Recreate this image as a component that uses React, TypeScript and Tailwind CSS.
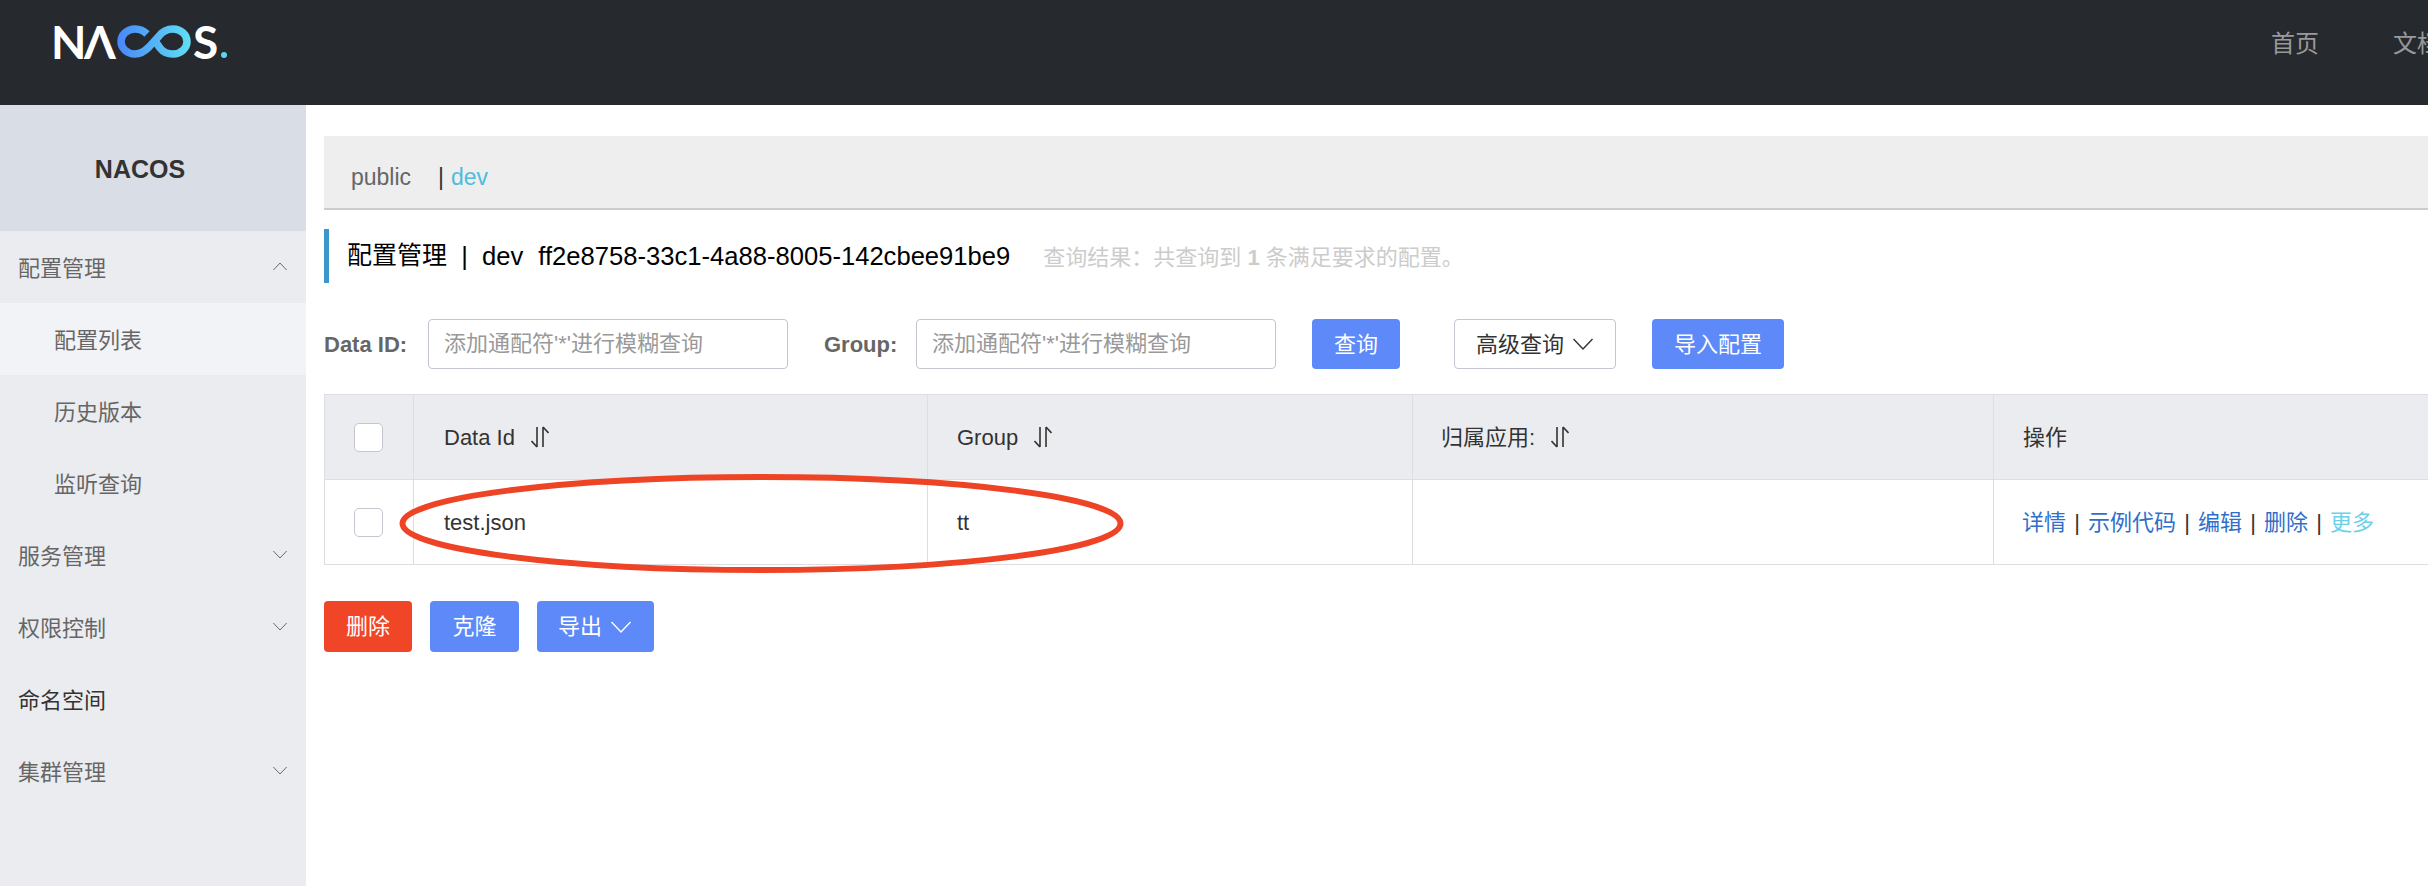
const sans = "font-['Liberation_Sans','Noto_Sans_CJK_SC',sans-serif]";

function Chevron({ up = false, className = "" }: { up?: boolean; className?: string }) {
  return (
    <svg viewBox="0 0 20 12" fill="none" stroke="currentColor" strokeWidth="1.4" className={className}>
      <path d={up ? "M.5 11 10 1l9.500 10" : "M.5 1 10 11l9.500-10"} />
    </svg>
  );
}

function SortIcon() {
  return (
    <svg viewBox="0 0 18 24" fill="none" stroke="#333" strokeWidth="1.6" className="ml-[16px] h-6 w-[18px]">
      <path d="M6 2v20M6 22 .5 16" />
      <path d="M12 22V2M12 2l5.500 6" />
    </svg>
  );
}

function Logo() {
  return (
    <div className="flex h-[33px] items-center font-['Lato',sans-serif] text-[46px] leading-[33px] font-bold text-white">
      <span className="w-[33px]">N</span>
      <span className="w-[33px]">Λ</span>
      <svg viewBox="0 0 74 33" fill="none" className="h-[33px] w-[74px]">
        <defs>
          <linearGradient id="nacos-loop" x1="0" x2="74" y1="0" y2="0" gradientUnits="userSpaceOnUse">
            <stop offset="0" stopColor="#4a86f7" />
            <stop offset="1" stopColor="#5fe0f5" />
          </linearGradient>
        </defs>
        <path
          d="M30 9C27 6 23 4 18 4 10 4 4 10 4 16.500 4 23 10 29 18 29c6 0 10-3 14-7l10-11c3-4 8-7 14-7 8 0 14 6 14 12.500 0 6.500-6 12.500-14 12.500-5 0-10-2-13-6l-5-7"
          stroke="url(#nacos-loop)"
          strokeWidth="7.500"
        />
      </svg>
      <span className="ml-[2px] w-[27px]">S</span>
      <span className="ml-[1px] h-[6px] w-[6px] self-end rounded-full bg-[#5fd4ee]" />
    </div>
  );
}

const menu = [
  { label: "配置管理", indent: false, arrow: "up" },
  { label: "配置列表", indent: true, active: true },
  { label: "历史版本", indent: true },
  { label: "监听查询", indent: true },
  { label: "服务管理", indent: false, arrow: "down" },
  { label: "权限控制", indent: false, arrow: "down" },
  { label: "命名空间", indent: false, dark: true },
  { label: "集群管理", indent: false, arrow: "down" },
];

function Sidebar() {
  return (
    <aside className="w-[306px] shrink-0 bg-[#ebecf0]">
      <div className="flex h-[126px] items-center justify-center bg-[#d9dde5] pt-[4px] pr-[26px] text-[25px] font-bold text-[#333]">
        NACOS
      </div>
      {menu.map((item) => (
        <div
          key={item.label}
          className={`flex h-[72px] items-center justify-between pt-[2px] pr-[19px] text-[22px] ${
            item.indent ? "pl-[54px]" : "pl-[18px]"
          } ${item.active ? "bg-[#f2f3f7]" : ""} ${item.dark ? "text-[#333]" : "text-[#666]"}`}
        >
          <span>{item.label}</span>
          {item.arrow && <Chevron up={item.arrow === "up"} className="mb-[3px] h-[9px] w-[14px] text-[#666]" />}
        </div>
      ))}
    </aside>
  );
}

function SearchInput({ className }: { className: string }) {
  return (
    <input
      readOnly
      placeholder="添加通配符'*'进行模糊查询"
      className={`h-[50px] rounded-[4px] border border-[#c4c6cf] bg-white px-[15px] text-[22px] placeholder:text-[#999] ${className}`}
    />
  );
}

function Checkbox() {
  return <span className="block h-[29px] w-[29px] rounded-[5px] border border-[#c4c6cf] bg-white" />;
}

const links = ["详情", "示例代码", "编辑", "删除"];

function ConfigTable() {
  return (
    <div className="mt-[25px] border-t border-[#dcdee3] text-[22px] text-[#333]">
      <div className="flex h-[85px] border-b border-l border-[#dcdee3] bg-[#ebecf0]">
        <div className="flex w-[89px] shrink-0 items-center justify-center border-r border-[#dcdee3] pr-[2px]">
          <Checkbox />
        </div>
        <div className="flex w-[514px] shrink-0 items-center border-r border-[#dcdee3] pl-[30px]">
          Data Id
          <SortIcon />
        </div>
        <div className="flex w-[485px] shrink-0 items-center border-r border-[#dcdee3] pl-[29px]">
          Group
          <SortIcon />
        </div>
        <div className="flex w-[581px] shrink-0 items-center border-r border-[#dcdee3] pl-[28px]">
          归属应用:
          <SortIcon />
        </div>
        <div className="flex flex-1 items-center pl-[29px]">操作</div>
      </div>
      <div className="flex h-[85px] border-b border-l border-[#dcdee3] bg-white">
        <div className="flex w-[89px] shrink-0 items-center justify-center border-r border-[#dcdee3] pr-[2px]">
          <Checkbox />
        </div>
        <div className="flex w-[514px] shrink-0 items-center border-r border-[#dcdee3] pl-[30px]">test.json</div>
        <div className="flex w-[485px] shrink-0 items-center border-r border-[#dcdee3] pl-[29px]">tt</div>
        <div className="w-[581px] shrink-0 border-r border-[#dcdee3]" />
        <div className="flex flex-1 items-center pl-[28px]">
          {links.map((link) => (
            <span key={link} className="flex items-center">
              <span className="text-[#2f6fcb]">{link}</span>
              <span className="w-[22px] text-center">|</span>
            </span>
          ))}
          <span className="text-[#6bd0e8]">更多</span>
        </div>
      </div>
    </div>
  );
}

export default function App() {
  return (
    <div className={`h-[886px] w-[2428px] overflow-hidden bg-white ${sans}`}>
      <header className="flex h-[105px] justify-between bg-[#26292e]">
        <div className="pl-[51px] pt-[25px]">
          <Logo />
        </div>
        <nav className="mr-[-13px] flex h-[88px] items-center gap-[74px] text-[24px] whitespace-nowrap text-[#999]">
          <span>首页</span>
          <span>文档</span>
        </nav>
      </header>
      <div className="flex h-[781px]">
        <Sidebar />
        <main className="relative min-w-0 flex-1 pt-[31px] pl-[18px]">
          <div className="flex h-[74px] items-center border-b-2 border-[#ccc] bg-[#eee] pt-[10px] pl-[27px] text-[23px] text-[#666]">
            <span className="w-[87px] shrink-0">public</span>
            <span className="w-[13px] text-[#333]">|</span>
            <span className="text-[#4fbcdc]">dev</span>
          </div>
          <div className="mt-[19px] flex h-[54px] items-center border-l-[5px] border-[#3b96c9] pl-[18px] text-[25.6px] whitespace-pre text-black">
            <span className="text-[25px]">配置管理</span>
            <span className="w-[35px] text-center">|</span>
            <span>dev</span>
            <span className="ml-[15px]">ff2e8758-33c1-4a88-8005-142cbee91be9</span>
            <span className="ml-[33px] pt-[2px] text-[22px] text-[#ccc]">
              查询结果：共查询到 <b>1</b> 条满足要求的配置。
            </span>
          </div>
          <div className="mt-[36px] flex h-[50px] items-center text-[22px]">
            <label className="w-[104px] font-bold text-[#666]">Data ID:</label>
            <SearchInput className="w-[360px]" />
            <label className="ml-[36px] w-[92px] font-bold text-[#666]">Group:</label>
            <SearchInput className="w-[360px]" />
            <button className="ml-[36px] h-[50px] w-[88px] rounded-[4px] bg-[#5e89f8] text-white">查询</button>
            <button className="ml-[54px] flex h-[50px] w-[162px] items-center gap-[9px] rounded-[4px] border border-[#c4c6cf] pl-[21px] text-[#333]">
              高级查询
              <Chevron className="h-[12px] w-[20px]" />
            </button>
            <button className="ml-[36px] h-[50px] w-[132px] rounded-[4px] bg-[#5e89f8] text-white">导入配置</button>
          </div>
          <ConfigTable />
          <div className="mt-[36px] flex gap-[18px] text-[22px] text-white">
            <button className="h-[51px] w-[88px] rounded-[4px] bg-[#f04526]">删除</button>
            <button className="h-[51px] w-[89px] rounded-[4px] bg-[#5e89f8]">克隆</button>
            <button className="flex h-[51px] w-[117px] items-center gap-[9px] rounded-[4px] bg-[#5e89f8] pl-[21px]">
              导出
              <Chevron className="h-[12px] w-[20px]" />
            </button>
          </div>
          {/* red hand-drawn marker around the row */}
          <svg viewBox="0 0 725 99" fill="none" className="absolute top-[369px] left-[93px] h-[99px] w-[725px]">
            <ellipse cx="362.500" cy="49.500" rx="359" ry="46.500" stroke="#ee4325" strokeWidth="6" />
          </svg>
        </main>
      </div>
    </div>
  );
}
